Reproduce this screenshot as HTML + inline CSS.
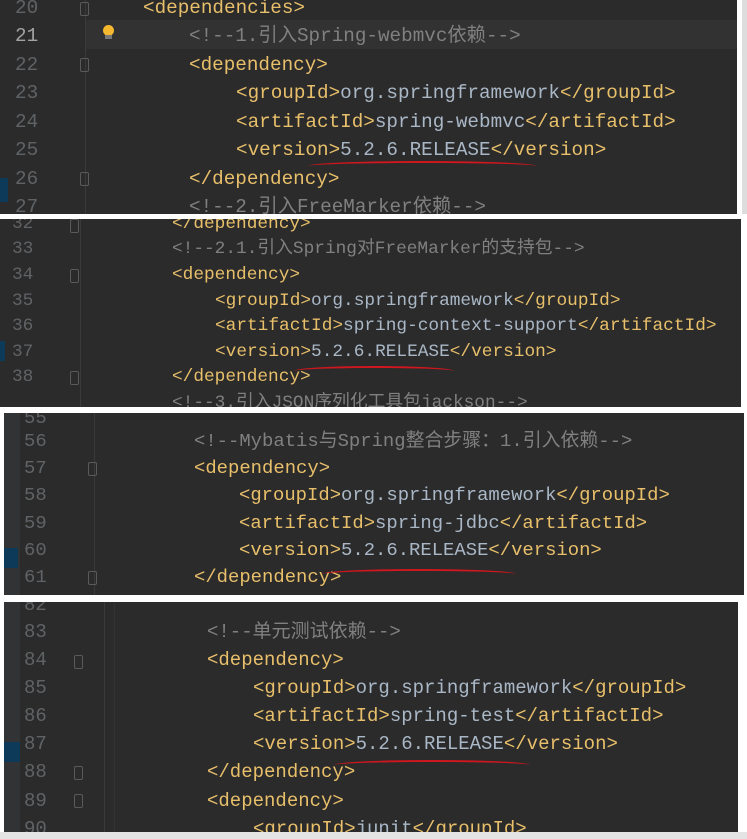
<!DOCTYPE html>
<html><head><meta charset="utf-8"><style>
body{margin:0;width:747px;height:839px;background:#fff;position:relative;overflow:hidden;font-family:"Liberation Mono","Noto Sans CJK SC",monospace;}
.p{position:absolute;background:#2b2b2b;overflow:hidden;}
.l{position:absolute;white-space:pre;left:0;}
.n{position:absolute;color:#606366;white-space:pre;}
.t{color:#e8bf6a}.x{color:#a9b7c6}.c{color:#808080}
.u{position:absolute;border-top:2.5px solid #d0161e;border-radius:50%;}
.g{position:absolute;width:1px;background:#3a3a3a;}
.m{position:absolute;background:#0d3a58;}
.f{position:absolute;width:7px;height:12px;border:1px solid #5a5a5a;border-radius:2px;}
</style></head><body>

<!-- panel 1 -->
<div class="p" style="left:0;top:0;width:737px;height:214px;font-size:19.3px;line-height:28.5px;">
<div style="position:absolute;left:85px;top:20px;width:652px;height:29px;background:#323232"></div>
<div class="g" style="left:85px;top:0;height:214px"></div>
<div class="m" style="left:0;top:178px;width:8px;height:24px"></div>
<div style="position:absolute;left:103px;top:25px;width:11px;height:11px;border-radius:50%;background:#f5b82e"></div>
<div style="position:absolute;left:105px;top:35px;width:7px;height:4px;background:#777"></div>
<div class="f" style="left:80px;top:2px"></div><div class="f" style="left:80px;top:58px"></div><div class="f" style="left:80px;top:172px"></div>
<div class="n" style="left:15px;top:-6px">20</div>
<div class="n" style="left:15px;top:22px;color:#a4a4a4">21</div>
<div class="n" style="left:15px;top:51px">22</div>
<div class="n" style="left:15px;top:79px">23</div>
<div class="n" style="left:15px;top:108px">24</div>
<div class="n" style="left:15px;top:136px">25</div>
<div class="n" style="left:15px;top:165px">26</div>
<div class="n" style="left:15px;top:193px">27</div>
<div class="l" style="left:143px;top:-6px"><span class="t">&lt;dependencies&gt;</span></div>
<div class="l" style="left:189px;top:22px"><span class="c">&lt;!--1.引入Spring-webmvc依赖--&gt;</span></div>
<div class="l" style="left:189px;top:51px"><span class="t">&lt;dependency&gt;</span></div>
<div class="l" style="left:236px;top:79px"><span class="t">&lt;groupId&gt;</span><span class="x">org.springframework</span><span class="t">&lt;/groupId&gt;</span></div>
<div class="l" style="left:236px;top:108px"><span class="t">&lt;artifactId&gt;</span><span class="x">spring-webmvc</span><span class="t">&lt;/artifactId&gt;</span></div>
<div class="l" style="left:236px;top:136px"><span class="t">&lt;version&gt;</span><span class="x">5.2.6.RELEASE</span><span class="t">&lt;/version&gt;</span></div>
<div class="l" style="left:189px;top:165px"><span class="t">&lt;/dependency&gt;</span></div>
<div class="l" style="left:189px;top:193px"><span class="c">&lt;!--2.引入FreeMarker依赖--&gt;</span></div>
<div class="u" style="left:308px;top:161px;width:228px;height:8px"></div>
</div>
<div style="position:absolute;left:742px;top:0;width:5px;height:214px;background:#ddd"></div>

<!-- panel 2 -->
<div class="p" style="left:0;top:219px;width:741px;height:188px;font-size:17.8px;line-height:25.6px;">
<div class="g" style="left:80px;top:0;height:188px"></div>
<div class="m" style="left:0;top:122px;width:5px;height:20px"></div>
<div class="f" style="left:70px;top:0px"></div><div class="f" style="left:70px;top:50px"></div><div class="f" style="left:70px;top:152px"></div>
<div class="n" style="left:12px;top:-7px">32</div>
<div class="n" style="left:12px;top:18px">33</div>
<div class="n" style="left:12px;top:44px">34</div>
<div class="n" style="left:12px;top:70px">35</div>
<div class="n" style="left:12px;top:95px">36</div>
<div class="n" style="left:12px;top:121px">37</div>
<div class="n" style="left:12px;top:146px">38</div>
<div class="l" style="left:172px;top:-7px"><span class="t">&lt;/dependency&gt;</span></div>
<div class="l" style="left:172px;top:18px"><span class="c">&lt;!--2.1.引入Spring对FreeMarker的支持包--&gt;</span></div>
<div class="l" style="left:172px;top:44px"><span class="t">&lt;dependency&gt;</span></div>
<div class="l" style="left:215px;top:70px"><span class="t">&lt;groupId&gt;</span><span class="x">org.springframework</span><span class="t">&lt;/groupId&gt;</span></div>
<div class="l" style="left:215px;top:95px"><span class="t">&lt;artifactId&gt;</span><span class="x">spring-context-support</span><span class="t">&lt;/artifactId&gt;</span></div>
<div class="l" style="left:215px;top:121px"><span class="t">&lt;version&gt;</span><span class="x">5.2.6.RELEASE</span><span class="t">&lt;/version&gt;</span></div>
<div class="l" style="left:172px;top:146px"><span class="t">&lt;/dependency&gt;</span></div>
<div class="l" style="left:172px;top:172px"><span class="c">&lt;!--3.引入JSON序列化工具包jackson--&gt;</span></div>
<div class="u" style="left:294px;top:147px;width:160px;height:8px"></div>
</div>

<!-- panel 3 -->
<div class="p" style="left:4px;top:413px;width:740px;height:182px;font-size:18.9px;line-height:27.3px;">
<div style="position:absolute;left:0;top:0;width:16px;height:182px;background:#313335"></div>
<div class="g" style="left:90px;top:0;height:182px"></div>
<div class="m" style="left:0;top:135px;width:14px;height:20px"></div>
<div class="f" style="left:84px;top:49px"></div><div class="f" style="left:84px;top:158px"></div>
<div class="n" style="left:20px;top:-8px">55</div>
<div class="n" style="left:20px;top:15px">56</div>
<div class="n" style="left:20px;top:42px">57</div>
<div class="n" style="left:20px;top:69px">58</div>
<div class="n" style="left:20px;top:97px">59</div>
<div class="n" style="left:20px;top:124px">60</div>
<div class="n" style="left:20px;top:151px">61</div>
<div class="l" style="left:190px;top:15px"><span class="c">&lt;!--Mybatis与Spring整合步骤：1.引入依赖--&gt;</span></div>
<div class="l" style="left:190px;top:42px"><span class="t">&lt;dependency&gt;</span></div>
<div class="l" style="left:235px;top:69px"><span class="t">&lt;groupId&gt;</span><span class="x">org.springframework</span><span class="t">&lt;/groupId&gt;</span></div>
<div class="l" style="left:235px;top:97px"><span class="t">&lt;artifactId&gt;</span><span class="x">spring-jdbc</span><span class="t">&lt;/artifactId&gt;</span></div>
<div class="l" style="left:235px;top:124px"><span class="t">&lt;version&gt;</span><span class="x">5.2.6.RELEASE</span><span class="t">&lt;/version&gt;</span></div>
<div class="l" style="left:190px;top:151px"><span class="t">&lt;/dependency&gt;</span></div>
<div class="u" style="left:318px;top:156px;width:194px;height:8px"></div>
</div>

<!-- panel 4 -->
<div class="p" style="left:4px;top:602px;width:734px;height:230px;font-size:19px;line-height:28.2px;">
<div style="position:absolute;left:0;top:0;width:16px;height:230px;background:#313335"></div>
<div class="g" style="left:100px;top:0;height:230px"></div>
<div class="g" style="left:110px;top:0;height:230px;background:#333"></div>
<div class="m" style="left:0;top:140px;width:16px;height:20px"></div>
<div class="f" style="left:70px;top:53px"></div><div class="f" style="left:70px;top:164px"></div><div class="f" style="left:70px;top:192px"></div>
<div class="n" style="left:20px;top:-11px">82</div>
<div class="n" style="left:20px;top:16px">83</div>
<div class="n" style="left:20px;top:44px">84</div>
<div class="n" style="left:20px;top:72px">85</div>
<div class="n" style="left:20px;top:100px">86</div>
<div class="n" style="left:20px;top:128px">87</div>
<div class="n" style="left:20px;top:156px">88</div>
<div class="n" style="left:20px;top:185px">89</div>
<div class="n" style="left:20px;top:213px">90</div>
<div class="l" style="left:203px;top:16px"><span class="c">&lt;!--单元测试依赖--&gt;</span></div>
<div class="l" style="left:203px;top:44px"><span class="t">&lt;dependency&gt;</span></div>
<div class="l" style="left:249px;top:72px"><span class="t">&lt;groupId&gt;</span><span class="x">org.springframework</span><span class="t">&lt;/groupId&gt;</span></div>
<div class="l" style="left:249px;top:100px"><span class="t">&lt;artifactId&gt;</span><span class="x">spring-test</span><span class="t">&lt;/artifactId&gt;</span></div>
<div class="l" style="left:249px;top:128px"><span class="t">&lt;version&gt;</span><span class="x">5.2.6.RELEASE</span><span class="t">&lt;/version&gt;</span></div>
<div class="l" style="left:203px;top:156px"><span class="t">&lt;/dependency&gt;</span></div>
<div class="l" style="left:203px;top:185px"><span class="t">&lt;dependency&gt;</span></div>
<div class="l" style="left:249px;top:213px"><span class="t">&lt;groupId&gt;</span><span class="x">junit</span><span class="t">&lt;/groupId&gt;</span></div>
<div class="u" style="left:330px;top:158px;width:196px;height:8px"></div>
</div>
<div style="position:absolute;left:0;top:832px;width:747px;height:7px;background:#e4e4e4"></div>
</body></html>
